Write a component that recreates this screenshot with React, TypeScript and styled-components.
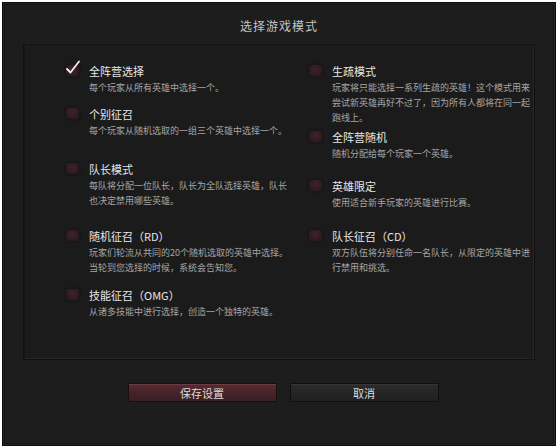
import styled, { createGlobalStyle } from "styled-components";

const Global = createGlobalStyle`
  html, body {
    margin: 0;
    padding: 0;
    background: #ffffff;
  }
  body {
    font-family: "Noto Sans CJK SC", "Noto Sans", sans-serif;
  }
`;

const Frame = styled.div`
  box-sizing: border-box;
  margin: 2px 0 0 2px;
  width: 554px;
  height: 444px;
  background: #1d1d1d;
  border: 1px solid #0b0b0b;
  box-shadow: inset 0 0 0 1px #2a2224, inset 0 0 0 2px #141414;
  display: flex;
  flex-direction: column;
  align-items: center;
`;

const Title = styled.div`
  height: 40px;
  width: 100%;
  display: flex;
  align-items: center;
  justify-content: center;
  padding-top: 5px;
  box-sizing: border-box;
  color: #c4c4c4;
  font-size: 12px;
  letter-spacing: 1px;
`;

const Panel = styled.div`
  box-sizing: border-box;
  width: 512px;
  height: 317px;
  background: #1b1b1b;
  border: 1px solid #101010;
  border-top-color: #2a1a1d;
  box-shadow: inset 1px 1px 0 #141414, inset -1px -1px 0 #262626;
  padding: 20px 0 0 42px;
  display: grid;
  grid-template-columns: 243px 222px;
`;

const Column = styled.div`
  display: flex;
  flex-direction: column;
`;

const Item = styled.div<{ $space: number }>`
  display: flex;
  align-items: flex-start;
  margin-bottom: ${(p) => p.$space}px;
`;

const Box = styled.div`
  position: relative;
  flex: none;
  width: 13px;
  height: 11px;
  margin-top: 1px;
  margin-right: 10px;
  border-radius: 3px;
  background: radial-gradient(ellipse at 50% 40%, #40232a 0%, #2c1b1e 70%, #221719 100%);
  box-shadow: 0 0 3px #120c0d;
`;

const Check = styled.svg`
  position: absolute;
  left: -1px;
  top: -5px;
`;

const Texts = styled.div`
  display: flex;
  flex-direction: column;
`;

const Label = styled.div`
  color: #e6e6e6;
  font-size: 11px;
  line-height: 14px;
`;

const Desc = styled.div<{ $w: number }>`
  width: ${(p) => p.$w}px;
  margin-top: 2px;
  color: #a6a6a6;
  font-size: 9px;
  line-height: 15px;
`;

const Buttons = styled.div`
  display: flex;
  gap: 13px;
  margin-top: 23px;
  padding-left: 8px;
`;

const Button = styled.div<{ $primary?: boolean }>`
  box-sizing: border-box;
  width: 149px;
  height: 19px;
  display: flex;
  align-items: center;
  justify-content: center;
  font-size: 11px;
  color: #dcdcdc;
  border: 1px solid ${(p) => (p.$primary ? "#1a0e10" : "#101010")};
  background: ${(p) =>
    p.$primary
      ? "linear-gradient(#5a2a31, #46232a 50%, #3a1e23)"
      : "linear-gradient(#2c2c2c, #252525 50%, #202020)"};
  box-shadow: inset 0 1px 0 ${(p) => (p.$primary ? "#6b3b42" : "#363636")};
`;

type Mode = { label: string; desc: string; space: number; checked?: boolean };

const left: Mode[] = [
  { label: "全阵营选择", desc: "每个玩家从所有英雄中选择一个。", space: 12, checked: true },
  { label: "个别征召", desc: "每个玩家从随机选取的一组三个英雄中选择一个。", space: 24 },
  { label: "队长模式", desc: "每队将分配一位队长，队长为全队选择英雄，队长也决定禁用哪些英雄。", space: 21 },
  { label: "随机征召（RD）", desc: "玩家们轮流从共同的20个随机选取的英雄中选择。当轮到您选择的时候，系统会告知您。", space: 13 },
  { label: "技能征召（OMG）", desc: "从诸多技能中进行选择，创造一个独特的英雄。", space: 0 },
];

const right: Mode[] = [
  { label: "生疏模式", desc: "玩家将只能选择一系列生疏的英雄！这个模式用来尝试新英雄再好不过了，因为所有人都将在同一起跑线上。", space: 5 },
  { label: "全阵营随机", desc: "随机分配给每个玩家一个英雄。", space: 18 },
  { label: "英雄限定", desc: "使用适合新手玩家的英雄进行比赛。", space: 19 },
  { label: "队长征召（CD）", desc: "双方队伍将分别任命一名队长，从限定的英雄中进行禁用和挑选。", space: 0 },
];

const ModeItem = ({ m, w }: { m: Mode; w: number }) => (
  <Item $space={m.space}>
    <Box>
      {m.checked && (
        <Check width="16" height="15" viewBox="0 0 16 15">
          <path d="M2 9 L5.5 12.5 L14 1.5" fill="none" stroke="#eeeeee" strokeWidth="1.8" strokeLinecap="round" strokeLinejoin="round" />
        </Check>
      )}
    </Box>
    <Texts>
      <Label>{m.label}</Label>
      <Desc $w={w}>{m.desc}</Desc>
    </Texts>
  </Item>
);

export default function App() {
  return (
    <>
      <Global />
      <Frame>
        <Title>选择游戏模式</Title>
        <Panel>
          <Column>
            {left.map((m) => (
              <ModeItem key={m.label} m={m} w={200} />
            ))}
          </Column>
          <Column>
            {right.map((m) => (
              <ModeItem key={m.label} m={m} w={199} />
            ))}
          </Column>
        </Panel>
        <Buttons>
          <Button $primary>保存设置</Button>
          <Button>取消</Button>
        </Buttons>
      </Frame>
    </>
  );
}
